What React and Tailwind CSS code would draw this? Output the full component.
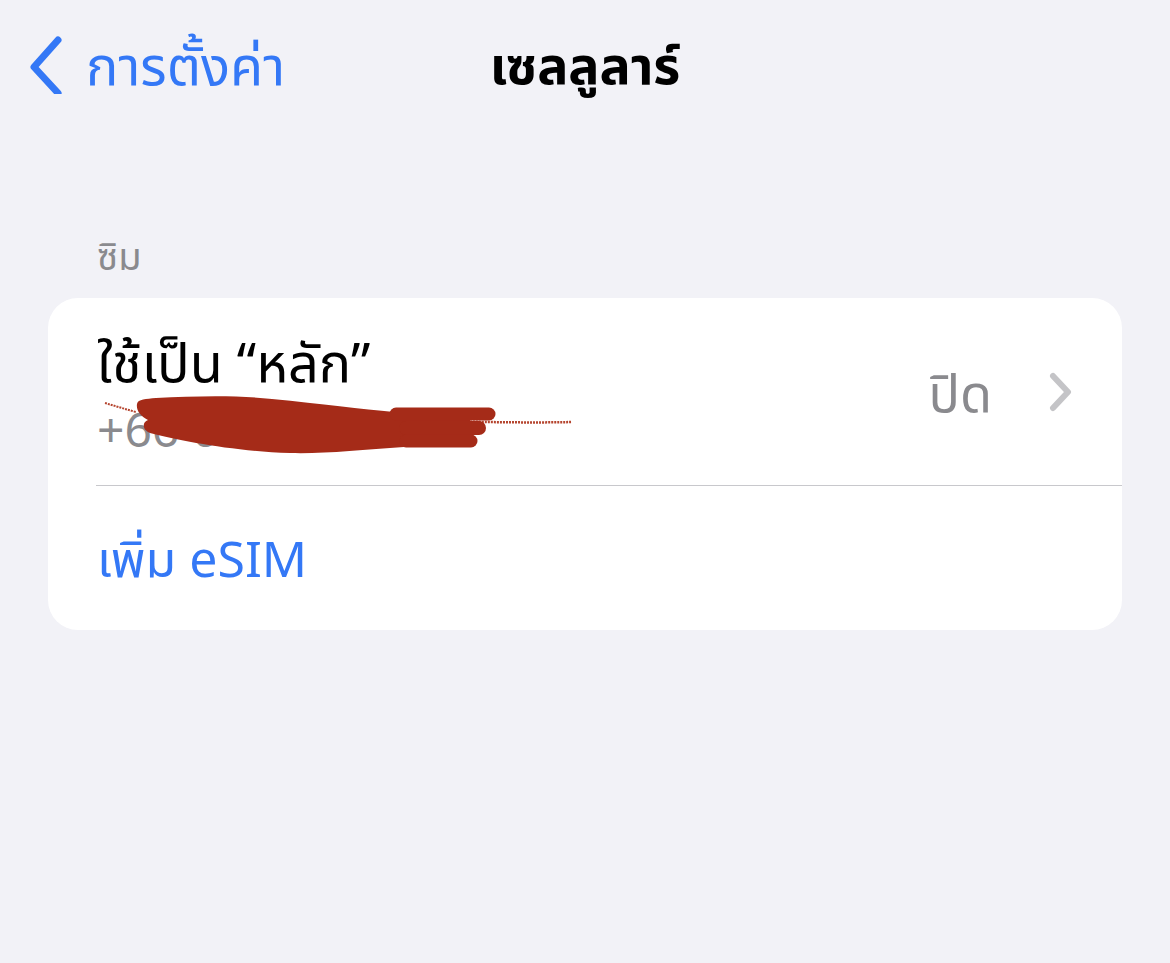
import React from 'react';

const font = { fontFamily: '"Noto Sans", "Noto Sans Thai", "Liberation Sans", sans-serif' };

// redaction scribble drawn over the phone number (page coords, shifted into the row)
const Scribble = () => (
  <svg className="absolute left-0 top-0 pointer-events-none" width="600" height="187" viewBox="0 0 600 187" fill="none">
    <g transform="translate(-48 -298)">
      <path d="M105 403 C115 406 125 409 136 412" stroke="#b5452f" strokeWidth="2" strokeDasharray="2 1" />
      <path d="M440 421 C480 422 530 423 572 422" stroke="#b5452f" strokeWidth="2.5" strokeDasharray="2 1" />
      <path
        d="M137 404 C138 399 146 399 156 398 C196 396 236 395 272 399 C322 404 362 409 394 412 L470 414 L470 446 L404 447 C362 450 322 454 290 453 C232 451 182 441 150 433 C142 430 142 422 148 420 C140 416 136 410 137 404 Z"
        fill="#a52b18"
      />
      <path d="M396 414 L489 414" stroke="#a52b18" strokeWidth="13" strokeLinecap="round" />
      <path d="M406 428 L479 428" stroke="#a52b18" strokeWidth="14" strokeLinecap="round" />
      <path d="M406 441 L471 441" stroke="#a52b18" strokeWidth="13" strokeLinecap="round" />
    </g>
  </svg>
);

const App = () => {
  return (
    <div className="w-[1170px] h-[963px] bg-[#f2f2f7] overflow-hidden" style={font}>
      {/* nav bar */}
      <div className="relative h-[135px] flex items-start pt-[34px]">
        <div className="flex items-center pl-[26px]">
          <svg width="40" height="60" viewBox="0 0 40 60" fill="none">
            <path d="M32 6 L8 33 L32 59" stroke="#3478f6" strokeWidth="7" strokeLinecap="round" strokeLinejoin="round" />
          </svg>
          <span className="ml-[20px] text-[54px] leading-[60px] text-[#3478f6]">การตั้งค่า</span>
        </div>
        <div className="absolute left-0 right-0 top-[34px] flex justify-center">
          <span className="text-[52px] leading-[60px] font-bold text-black">เซลลูลาร์</span>
        </div>
      </div>

      <div className="pt-[97px] px-[48px]">
        <div className="pl-[49px] pb-[20px] text-[38px] leading-[46px] text-[#8a8a8e]">ซิม</div>

        <div className="bg-white rounded-[30px] overflow-hidden">
          <div className="relative flex items-center h-[187px] pl-[49px] pr-[48px]">
            <div className="flex-1 flex flex-col pt-[2px]">
              <span className="text-[54px] leading-[64px] text-black">ใช้เป็น “หลัก”</span>
              <span className="mt-[8px] text-[48px] leading-[56px] text-[#8a8a8e]">+66 00 000 0000</span>
            </div>
            <Scribble />
            <span className="text-[52px] leading-[60px] text-[#8a8a8e] mr-[56px]">ปิด</span>
            <svg width="26" height="40" viewBox="0 0 26 40" fill="none">
              <path d="M5 4 L20 20 L5 36" stroke="#c4c4c7" strokeWidth="6" strokeLinecap="round" strokeLinejoin="round" />
            </svg>
          </div>
          <div className="ml-[48px] h-[1px] bg-[#c8c8cc]" />
          <div className="h-[144px] flex items-center pl-[49px]">
            <span className="text-[50px] leading-[60px] text-[#3478f6]">เพิ่ม eSIM</span>
          </div>
        </div>
      </div>
    </div>
  );
};

export default App;
